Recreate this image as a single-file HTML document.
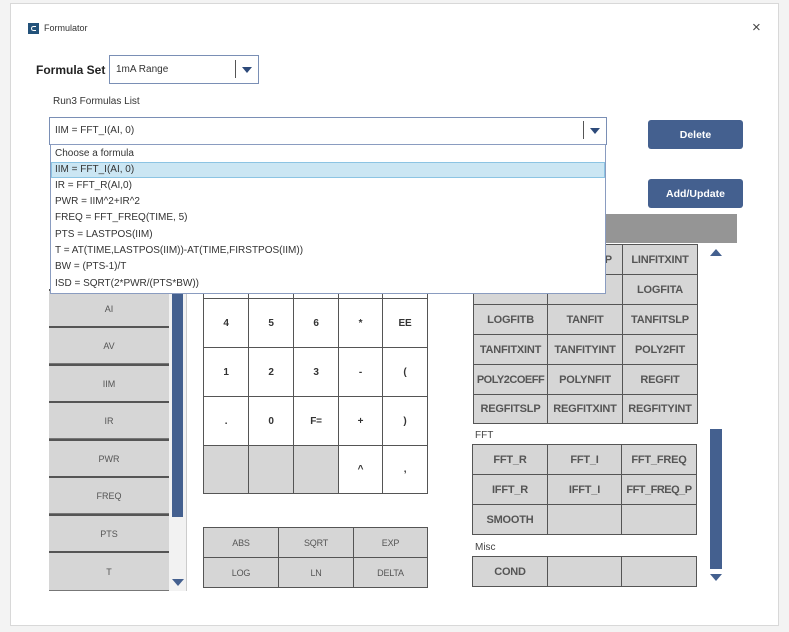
<!DOCTYPE html>
<html><head><meta charset="utf-8"><style>
*{margin:0;padding:0;box-sizing:border-box}
body{width:789px;height:632px;background:#f3f3f3;position:relative;overflow:hidden;font-family:"Liberation Sans",sans-serif;color:#333}
.a{position:absolute}
.dlg{left:10px;top:3px;width:769px;height:623px;background:#fff;border:1px solid #d8d8d8}
.cell{position:absolute;border:1px solid #555;background:#d6d6d6;display:flex;align-items:center;justify-content:center;font-size:11px;font-weight:bold;color:#555;white-space:nowrap;letter-spacing:-0.2px}
.w{background:#fff;color:#333;font-size:10px}
.lc{position:absolute;left:49px;width:120px;height:38px;background:#d6d6d6;border-top:2px solid #555;border-bottom:1px solid #777;display:flex;align-items:center;justify-content:center;font-size:9px;color:#555}
.fn{font-size:9px;font-weight:normal;color:#555}
.btn{position:absolute;left:648px;width:95px;height:29px;background:#44608f;border-radius:3px;color:#fff;font-size:10.5px;font-weight:bold;display:flex;align-items:center;justify-content:center}
.row{position:absolute;left:4px;font-size:10px;color:#333;height:16px;line-height:16px}
</style></head><body>
<div class="a dlg"></div>
<div class="a" style="left:28px;top:23px;width:11px;height:11px;background:#23527a"></div>
<div class="a" style="left:31px;top:26px;width:5px;height:5px;border:1.5px solid #fff;border-right:none;border-radius:3px 0 0 3px"></div>
<div class="a" style="left:44px;top:23px;font-size:9px;color:#333">Formulator</div>
<div class="a" style="left:752px;top:19px;font-size:15px;color:#444">×</div>

<div class="a" style="left:36px;top:63px;font-size:12px;font-weight:bold;color:#222">Formula Set</div>
<div class="a" style="left:109px;top:55px;width:150px;height:29px;border:1px solid #7a8fb5"></div>
<div class="a" style="left:116px;top:64px;font-size:10px;color:#333">1mA Range</div>
<div class="a" style="left:235px;top:60px;width:1px;height:18px;background:#555"></div>
<div class="a" style="left:242px;top:67px;border-left:5px solid transparent;border-right:5px solid transparent;border-top:6px solid #2d4a7a"></div>
<div class="a" style="left:53px;top:96px;font-size:10px;color:#333">Run3 Formulas List</div>

<div class="lc" style="top:289px">AI</div>
<div class="lc" style="top:326px">AV</div>
<div class="lc" style="top:364px">IIM</div>
<div class="lc" style="top:401px">IR</div>
<div class="lc" style="top:439px">PWR</div>
<div class="lc" style="top:476px">FREQ</div>
<div class="lc" style="top:514px">PTS</div>
<div class="lc" style="top:551px;height:40px">T</div>
<div class="a" style="left:169px;top:289px;width:18px;height:302px;background:#f2f2f2;border-right:1px solid #ccc"></div>
<div class="a" style="left:172px;top:289px;width:11px;height:228px;background:#44608f"></div>
<div class="a" style="left:172px;top:579px;border-left:6px solid transparent;border-right:6px solid transparent;border-top:7px solid #44608f"></div>

<div class="cell w" style="left:203px;top:250px;width:46px;height:49px"></div>
<div class="cell w" style="left:248px;top:250px;width:46px;height:49px"></div>
<div class="cell w" style="left:293px;top:250px;width:46px;height:49px"></div>
<div class="cell w" style="left:338px;top:250px;width:45px;height:49px"></div>
<div class="cell w" style="left:382px;top:250px;width:46px;height:49px"></div>
<div class="cell w" style="left:203px;top:298px;width:46px;height:50px">4</div>
<div class="cell w" style="left:248px;top:298px;width:46px;height:50px">5</div>
<div class="cell w" style="left:293px;top:298px;width:46px;height:50px">6</div>
<div class="cell w" style="left:338px;top:298px;width:45px;height:50px">*</div>
<div class="cell w" style="left:382px;top:298px;width:46px;height:50px">EE</div>
<div class="cell w" style="left:203px;top:347px;width:46px;height:50px">1</div>
<div class="cell w" style="left:248px;top:347px;width:46px;height:50px">2</div>
<div class="cell w" style="left:293px;top:347px;width:46px;height:50px">3</div>
<div class="cell w" style="left:338px;top:347px;width:45px;height:50px">-</div>
<div class="cell w" style="left:382px;top:347px;width:46px;height:50px">(</div>
<div class="cell w" style="left:203px;top:396px;width:46px;height:50px">.</div>
<div class="cell w" style="left:248px;top:396px;width:46px;height:50px">0</div>
<div class="cell w" style="left:293px;top:396px;width:46px;height:50px">F=</div>
<div class="cell w" style="left:338px;top:396px;width:45px;height:50px">+</div>
<div class="cell w" style="left:382px;top:396px;width:46px;height:50px">)</div>
<div class="cell" style="left:203px;top:445px;width:46px;height:49px"></div>
<div class="cell" style="left:248px;top:445px;width:46px;height:49px"></div>
<div class="cell" style="left:293px;top:445px;width:46px;height:49px"></div>
<div class="cell w" style="left:338px;top:445px;width:45px;height:49px">^</div>
<div class="cell w" style="left:382px;top:445px;width:46px;height:49px">,</div>

<div class="cell fn" style="left:203px;top:527px;width:76px;height:31px">ABS</div>
<div class="cell fn" style="left:278px;top:527px;width:76px;height:31px">SQRT</div>
<div class="cell fn" style="left:353px;top:527px;width:75px;height:31px">EXP</div>
<div class="cell fn" style="left:203px;top:557px;width:76px;height:31px">LOG</div>
<div class="cell fn" style="left:278px;top:557px;width:76px;height:31px">LN</div>
<div class="cell fn" style="left:353px;top:557px;width:75px;height:31px">DELTA</div>

<div class="a" style="left:473px;top:214px;width:264px;height:29px;background:#959595"></div>
<div class="cell" style="left:473px;top:244px;width:75px;height:31px"></div>
<div class="cell" style="left:547px;top:244px;width:76px;height:31px">LINFITSLP</div>
<div class="cell" style="left:622px;top:244px;width:76px;height:31px">LINFITXINT</div>
<div class="cell" style="left:473px;top:274px;width:75px;height:31px"></div>
<div class="cell" style="left:547px;top:274px;width:76px;height:31px"></div>
<div class="cell" style="left:622px;top:274px;width:76px;height:31px">LOGFITA</div>
<div class="cell" style="left:473px;top:304px;width:75px;height:31px">LOGFITB</div>
<div class="cell" style="left:547px;top:304px;width:76px;height:31px">TANFIT</div>
<div class="cell" style="left:622px;top:304px;width:76px;height:31px">TANFITSLP</div>
<div class="cell" style="left:473px;top:334px;width:75px;height:31px">TANFITXINT</div>
<div class="cell" style="left:547px;top:334px;width:76px;height:31px">TANFITYINT</div>
<div class="cell" style="left:622px;top:334px;width:76px;height:31px">POLY2FIT</div>
<div class="cell" style="left:473px;top:364px;width:75px;height:31px;letter-spacing:-0.5px">POLY2COEFF</div>
<div class="cell" style="left:547px;top:364px;width:76px;height:31px">POLYNFIT</div>
<div class="cell" style="left:622px;top:364px;width:76px;height:31px">REGFIT</div>
<div class="cell" style="left:473px;top:394px;width:75px;height:30px">REGFITSLP</div>
<div class="cell" style="left:547px;top:394px;width:76px;height:30px">REGFITXINT</div>
<div class="cell" style="left:622px;top:394px;width:76px;height:30px">REGFITYINT</div>
<div class="a" style="left:475px;top:430px;font-size:10px;color:#444">FFT</div>
<div class="cell" style="left:472px;top:444px;width:76px;height:31px">FFT_R</div>
<div class="cell" style="left:547px;top:444px;width:75px;height:31px">FFT_I</div>
<div class="cell" style="left:621px;top:444px;width:76px;height:31px">FFT_FREQ</div>
<div class="cell" style="left:472px;top:474px;width:76px;height:31px">IFFT_R</div>
<div class="cell" style="left:547px;top:474px;width:75px;height:31px">IFFT_I</div>
<div class="cell" style="left:621px;top:474px;width:76px;height:31px;letter-spacing:-0.5px">FFT_FREQ_P</div>
<div class="cell" style="left:472px;top:504px;width:76px;height:31px">SMOOTH</div>
<div class="cell" style="left:547px;top:504px;width:75px;height:31px"></div>
<div class="cell" style="left:621px;top:504px;width:76px;height:31px"></div>
<div class="a" style="left:475px;top:542px;font-size:10px;color:#444">Misc</div>
<div class="cell" style="left:472px;top:556px;width:76px;height:31px">COND</div>
<div class="cell" style="left:547px;top:556px;width:75px;height:31px"></div>
<div class="cell" style="left:621px;top:556px;width:76px;height:31px"></div>
<div class="a" style="left:710px;top:249px;border-left:6px solid transparent;border-right:6px solid transparent;border-bottom:7px solid #44608f"></div>
<div class="a" style="left:710px;top:429px;width:12px;height:140px;background:#44608f"></div>
<div class="a" style="left:710px;top:574px;border-left:6px solid transparent;border-right:6px solid transparent;border-top:7px solid #44608f"></div>

<div class="btn" style="top:120px">Delete</div>
<div class="btn" style="top:179px">Add/Update</div>

<div class="a" style="left:49px;top:117px;width:558px;height:28px;border:1px solid #7a8fb5;background:#fff"></div>
<div class="a" style="left:55px;top:125px;font-size:10px;color:#333">IIM = FFT_I(AI, 0)</div>
<div class="a" style="left:583px;top:121px;width:1px;height:18px;background:#555"></div>
<div class="a" style="left:590px;top:128px;border-left:5px solid transparent;border-right:5px solid transparent;border-top:6px solid #2d4a7a"></div>
<div class="a" style="left:50px;top:144px;width:556px;height:150px;background:#fff;border:1px solid #8a9cc0">
 <div class="a" style="left:0;top:17px;width:554px;height:16px;background:#cbe6f3;border:1px solid #8cc4e3"></div>
 <div class="row" style="top:1px">Choose a formula</div>
 <div class="row" style="top:17px">IIM = FFT_I(AI, 0)</div>
 <div class="row" style="top:33px">IR = FFT_R(AI,0)</div>
 <div class="row" style="top:49px">PWR = IIM^2+IR^2</div>
 <div class="row" style="top:65px">FREQ = FFT_FREQ(TIME, 5)</div>
 <div class="row" style="top:82px">PTS = LASTPOS(IIM)</div>
 <div class="row" style="top:98px">T = AT(TIME,LASTPOS(IIM))-AT(TIME,FIRSTPOS(IIM))</div>
 <div class="row" style="top:114px">BW = (PTS-1)/T</div>
 <div class="row" style="top:131px">ISD = SQRT(2*PWR/(PTS*BW))</div>
</div>
</body></html>
